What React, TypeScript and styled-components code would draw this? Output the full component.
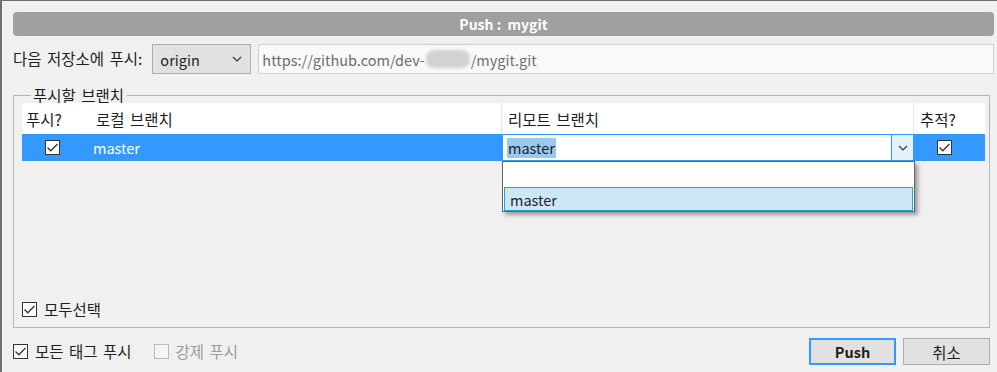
import styled, { createGlobalStyle } from "styled-components";

const GlobalStyle = createGlobalStyle`
  body {
    margin: 0;
    background: #f0f0f0;
    font-family: "Noto Sans CJK KR", "Noto Sans", sans-serif;
    font-size: 15.5px;
    word-spacing: 2px;
    color: #1e1e1e;
  }
`;

const Window = styled.div`
  width: 997px;
  height: 372px;
  box-sizing: border-box;
  border-top: 1px solid #6f6f6f;
  border-left: 2px solid #6f6f6f;
  background: #f0f0f0;
  padding: 11px 3px 0 11px;
  display: flex;
  flex-direction: column;
  overflow: hidden;
`;

const TitleBar = styled.div`
  height: 24px;
  border-radius: 4px;
  background: #a0a0a0;
  color: #ffffff;
  font-weight: 700;
  font-size: 14px;
  word-spacing: 0;
  display: flex;
  align-items: center;
  justify-content: center;
  white-space: pre;
`;

const RemoteRow = styled.div`
  margin-top: 8px;
  display: flex;
  align-items: center;
  height: 30px;
`;

const Label = styled.span<{ $disabled?: boolean }>`
  color: ${(p) => (p.$disabled ? "#9a9a9a" : "#1e1e1e")};
  white-space: nowrap;
  line-height: 1;
`;

const Latin = styled.span`
  font-size: 14.5px;
  word-spacing: 0;
`;

const Select = styled.div`
  margin-left: 10px;
  width: 99px;
  height: 30px;
  box-sizing: border-box;
  border: 1px solid #adadad;
  background: #e1e1e1;
  display: flex;
  align-items: center;
  justify-content: space-between;
  padding: 0 8px 0 7px;
`;

const UrlInput = styled.div`
  margin-left: 7px;
  flex: 1;
  height: 30px;
  box-sizing: border-box;
  border: 1px solid #cfcfcf;
  background: #f9f9f9;
  color: #6d6d6d;
  display: flex;
  align-items: center;
  padding-left: 3px;
`;

const Blur = styled.span`
  display: inline-block;
  width: 44px;
  height: 18px;
  border-radius: 8px;
  background: #d2d2d2;
  filter: blur(1.5px);
  margin: 0 1px;
`;

const Group = styled.fieldset`
  margin: 13px 4px 0 0;
  padding: 0 4px 10px 8px;
  border: 1px solid #b4b4b4;
  min-width: 0;
`;

const Legend = styled.legend`
  margin-left: 9px;
  padding: 0 3px 0 2px;
  line-height: 16px;
`;

const GroupBody = styled.div`
  height: 214px;
  display: flex;
  flex-direction: column;
`;

const Table = styled.div`
  flex: 1;
  display: grid;
  grid-template-columns: 70px 410px 412px 71px;
  grid-template-rows: 31px 27px;
  align-content: start;
`;

const HeadCell = styled.div<{ $divider?: boolean; $pad?: number }>`
  background: #ffffff;
  display: flex;
  align-items: center;
  padding-left: ${(p) => p.$pad ?? 6}px;
  border-right: ${(p) => (p.$divider ? "1px solid #e4e4e4" : "none")};
`;

const RowCell = styled.div<{ $center?: boolean; $pad?: number; $top?: number }>`
  background: #3399ff;
  color: #ffffff;
  display: flex;
  align-items: ${(p) => (p.$center ? "center" : "flex-start")};
  justify-content: ${(p) => (p.$center ? "center" : "flex-start")};
  padding-left: ${(p) => p.$pad ?? 0}px;
  padding-right: ${(p) => (p.$center ? 10 : 0)}px;
  padding-top: ${(p) => p.$top ?? 0}px;
  box-sizing: border-box;
`;

const Combo = styled.div`
  position: relative;
  display: flex;
  width: 100%;
  height: 27px;
  box-sizing: border-box;
  border: 1px solid #3399ff;
  background: #ffffff;
`;

const ComboText = styled.div`
  flex: 1;
  display: flex;
  align-items: center;
  padding-left: 4px;
  color: #1e1e1e;
`;

const Highlight = styled(Latin)`
  background: #99c9ef;
  line-height: 20px;
  padding: 0 1px;
`;

const ComboButton = styled.div`
  width: 21px;
  border-left: 1px solid #3399ff;
  background: #e5f1fb;
  display: flex;
  align-items: center;
  justify-content: center;
`;

const DropList = styled.div`
  position: absolute;
  top: 26px;
  left: -1px;
  width: 413px;
  height: 51px;
  box-sizing: border-box;
  border: 1px solid #646464;
  background: #ffffff;
  box-shadow: 3px 3px 4px rgba(0, 0, 0, 0.35);
  padding: 1px 0 0 1px;
  z-index: 2;
`;

const DropItem = styled.div<{ $selected?: boolean }>`
  height: 24px;
  width: 409px;
  box-sizing: border-box;
  display: flex;
  align-items: center;
  padding-left: 5px;
  color: #1e1e1e;
  font-size: 14.5px;
  background: ${(p) => (p.$selected ? "#cce8f6" : "#ffffff")};
  border: ${(p) => (p.$selected ? "1px solid #26a0da" : "1px solid transparent")};
`;

const CheckRow = styled.label<{ $gap?: number }>`
  display: flex;
  align-items: center;
  gap: ${(p) => p.$gap ?? 7}px;
`;

const Box = styled.span<{ $disabled?: boolean }>`
  width: 15px;
  height: 15px;
  box-sizing: border-box;
  border: 1px solid ${(p) => (p.$disabled ? "#bcbcbc" : "#333333")};
  background: ${(p) => (p.$disabled ? "#f4f4f4" : "#ffffff")};
  display: inline-flex;
  align-items: center;
  justify-content: center;
  flex: none;
`;

const BottomBar = styled.div`
  margin-top: 10px;
  padding-right: 4px;
  display: flex;
  align-items: center;
  height: 27px;
`;

const Options = styled.div`
  flex: 1;
  display: flex;
  align-items: center;
  gap: 22px;
`;

const Button = styled.button<{ $primary?: boolean }>`
  width: 87px;
  height: 27px;
  box-sizing: border-box;
  margin-left: 7px;
  border: ${(p) => (p.$primary ? "2px solid #3399ff" : "1px solid #adadad")};
  background: #e1e1e1;
  font-family: "Noto Sans CJK KR", "Noto Sans", sans-serif;
  font-size: ${(p) => (p.$primary ? 14.5 : 15.5)}px;
  font-weight: ${(p) => (p.$primary ? 700 : 400)};
  color: #1e1e1e;
  padding: 0;
`;

const Check = ({ disabled }: { disabled?: boolean }) => (
  <Box $disabled={disabled}>
    {!disabled && (
      <svg width="11" height="9" viewBox="0 0 11 9">
        <path d="M0.5 4.5 L3.8 7.8 L10.5 1" fill="none" stroke="#333" strokeWidth="1.3" />
      </svg>
    )}
  </Box>
);

const Chevron = () => (
  <svg width="10" height="6" viewBox="0 0 10 6">
    <path d="M1 1 L5 5 L9 1" fill="none" stroke="#333" strokeWidth="1.2" />
  </svg>
);

export default function App() {
  return (
    <>
      <GlobalStyle />
      <Window>
        <TitleBar>Push :  mygit</TitleBar>

        <RemoteRow>
          <Label>다음 저장소에 푸시:</Label>
          <Select>
            <Latin>origin</Latin>
            <Chevron />
          </Select>
          <UrlInput>
            <Latin>https://github.com/dev-</Latin>
            <Blur />
            <Latin>/mygit.git</Latin>
          </UrlInput>
        </RemoteRow>

        <Group>
          <Legend>푸시할 브랜치</Legend>
          <GroupBody>
            <Table>
              <HeadCell $pad={4}>푸시?</HeadCell>
              <HeadCell $pad={4} $divider>
                로컬 브랜치
              </HeadCell>
              <HeadCell $divider>리모트 브랜치</HeadCell>
              <HeadCell>추적?</HeadCell>

              <RowCell $center>
                <Check />
              </RowCell>
              <RowCell $pad={1} $top={3}>
                <Latin>master</Latin>
              </RowCell>
              <RowCell>
                <Combo>
                  <ComboText>
                    <Highlight>master</Highlight>
                  </ComboText>
                  <ComboButton>
                    <Chevron />
                  </ComboButton>
                  <DropList>
                    <DropItem />
                    <DropItem $selected>master</DropItem>
                  </DropList>
                </Combo>
              </RowCell>
              <RowCell $center>
                <Check />
              </RowCell>
            </Table>
            <CheckRow>
              <Check />
              <Label>모두선택</Label>
            </CheckRow>
          </GroupBody>
        </Group>

        <BottomBar>
          <Options>
            <CheckRow>
              <Check />
              <Label>모든 태그 푸시</Label>
            </CheckRow>
            <CheckRow>
              <Check disabled />
              <Label $disabled>강제 푸시</Label>
            </CheckRow>
          </Options>
          <Button $primary>Push</Button>
          <Button>취소</Button>
        </BottomBar>
      </Window>
    </>
  );
}
